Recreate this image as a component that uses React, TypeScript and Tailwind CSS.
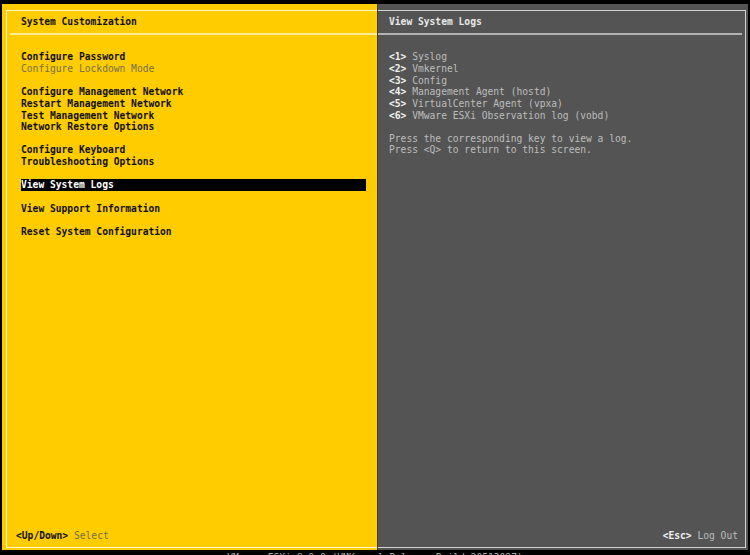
import type { ReactNode } from "react"

const leftItems: { label: string; dim?: boolean; selected?: boolean }[] = [
  { label: "Configure Password" },
  { label: "Configure Lockdown Mode", dim: true },
  { label: "" },
  { label: "Configure Management Network" },
  { label: "Restart Management Network" },
  { label: "Test Management Network" },
  { label: "Network Restore Options" },
  { label: "" },
  { label: "Configure Keyboard" },
  { label: "Troubleshooting Options" },
  { label: "" },
  { label: "View System Logs", selected: true },
  { label: "" },
  { label: "View Support Information" },
  { label: "" },
  { label: "Reset System Configuration" },
]

const logs = [
  { key: "1", name: "Syslog" },
  { key: "2", name: "Vmkernel" },
  { key: "3", name: "Config" },
  { key: "4", name: "Management Agent (hostd)" },
  { key: "5", name: "VirtualCenter Agent (vpxa)" },
  { key: "6", name: "VMware ESXi Observation log (vobd)" },
]

function Row({ children, className = "" }: { children?: ReactNode; className?: string }) {
  return <div className={`h-[11.67px] leading-[11.67px] whitespace-pre ${className}`}>{children}</div>
}

export default function App() {
  return (
    <div className="w-[750px] h-[555px] overflow-hidden bg-black flex flex-col pt-[4px] font-['DejaVu_Sans_Mono',monospace] text-[9.64px]">
      <div className="flex h-[546px] mx-[2px] shrink-0">
        {/* left: menu */}
        <div className="w-[375px] bg-[#ffcc00] pl-[4px] pt-[6px] pb-[2px] flex">
          <div className="flex-1 flex flex-col border-l border-t border-b border-[#fff6d0]">
            <Row className="mt-[5.2px] pl-[14px] font-bold text-[#111]">System Customization</Row>
            <div className="mt-[4.9px] ml-[3px] h-[2px] bg-[#ffeb9a]" />
            <div className="mt-[16.5px] pl-[14px]">
              {leftItems.map((item, i) =>
                item.selected ? (
                  <Row key={i} className="w-[345px] bg-black text-white font-bold">
                    {item.label}
                  </Row>
                ) : (
                  <Row key={i} className={item.dim ? "text-[#76704c]" : "font-bold text-[#111]"}>
                    {item.label}
                  </Row>
                )
              )}
            </div>
            <div className="flex-1" />
            <Row className="pl-[9px] mb-[5.2px]">
              <span className="font-bold text-[#111]">&lt;Up/Down&gt;</span>
              <span className="text-[#76704c]"> Select</span>
            </Row>
          </div>
        </div>

        {/* right: detail */}
        <div className="flex-1 bg-[#545454] border-l border-[#3d3d3d] pr-[2px] pt-[6px] pb-[2px] flex">
          <div className="flex-1 flex flex-col border-t border-r border-b border-[#d2d2d2]">
            <Row className="mt-[5.2px] pl-[11px] font-bold text-[#e8e8e8]">View System Logs</Row>
            <div className="mt-[4.9px] mr-[3px] h-[2px] bg-[#b2b2b2]" />
            <div className="mt-[16.5px] pl-[11px]">
              {logs.map((l) => (
                <Row key={l.key}>
                  <span className="font-bold text-[#f0f0f0]">&lt;{l.key}&gt;</span>
                  <span className="text-[#bdbdbd]"> {l.name}</span>
                </Row>
              ))}
              <Row />
              <Row className="text-[#bdbdbd]">Press the corresponding key to view a log.</Row>
              <Row className="text-[#bdbdbd]">Press &lt;Q&gt; to return to this screen.</Row>
            </div>
            <div className="flex-1" />
            <Row className="self-end pr-[7px] mb-[5.2px]">
              <span className="font-bold text-[#f0f0f0]">&lt;Esc&gt;</span>
              <span className="text-[#bdbdbd]"> Log Out</span>
            </Row>
          </div>
        </div>
      </div>

      {/* status line, mostly below the visible area */}
      <Row className="mt-[1.5px] text-center text-[#a8a8a8] shrink-0">
        VMware ESXi 8.0.0 (VMKernel Release Build 20513097)
      </Row>
    </div>
  )
}
